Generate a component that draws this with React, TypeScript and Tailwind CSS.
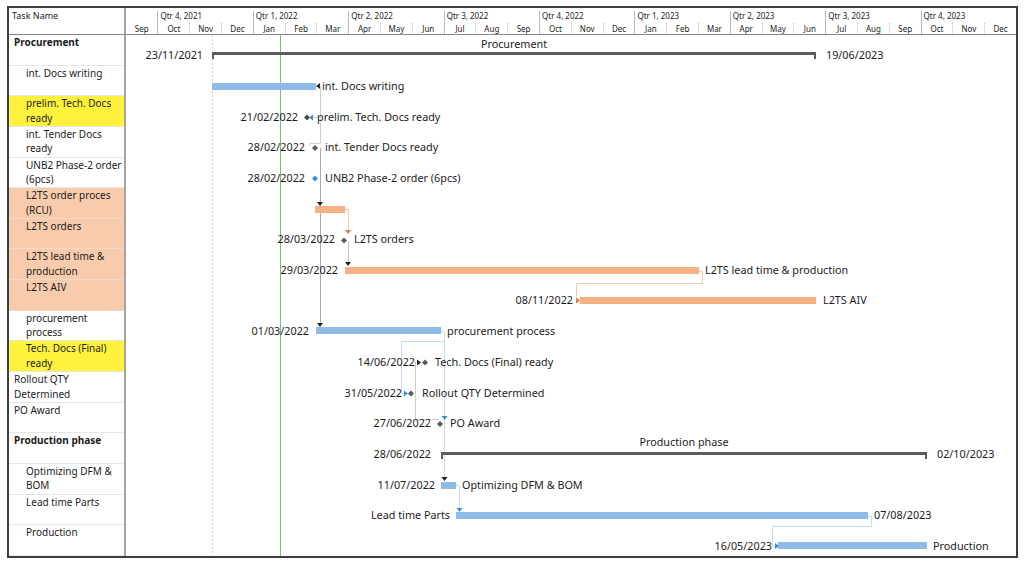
import React from "react";

type Row = { lines: string[]; bold?: boolean; indent?: boolean; bg?: "y" | "s" };

const rows: Row[] = [
  { lines: ["Procurement"], bold: true },
  { lines: ["int. Docs writing"], indent: true },
  { lines: ["prelim. Tech. Docs", "ready"], indent: true, bg: "y" },
  { lines: ["int. Tender Docs", "ready"], indent: true },
  { lines: ["UNB2 Phase-2 order", "(6pcs)"], indent: true },
  { lines: ["L2TS order proces", "(RCU)"], indent: true, bg: "s" },
  { lines: ["L2TS orders"], indent: true, bg: "s" },
  { lines: ["L2TS lead time &", "production"], indent: true, bg: "s" },
  { lines: ["L2TS AIV"], indent: true, bg: "s" },
  { lines: ["procurement", "process"], indent: true },
  { lines: ["Tech. Docs (Final)", "ready"], indent: true, bg: "y" },
  { lines: ["Rollout QTY", "Determined"] },
  { lines: ["PO Award"] },
  { lines: ["Production phase"], bold: true },
  { lines: ["Optimizing DFM &", "BOM"], indent: true },
  { lines: ["Lead time Parts"], indent: true },
  { lines: ["Production"], indent: true },
];

const quarters: { label: string; months: string[] }[] = [
  { label: "", months: ["Sep"] },
  { label: "Qtr 4, 2021", months: ["Oct", "Nov", "Dec"] },
  { label: "Qtr 1, 2022", months: ["Jan", "Feb", "Mar"] },
  { label: "Qtr 2, 2022", months: ["Apr", "May", "Jun"] },
  { label: "Qtr 3, 2022", months: ["Jul", "Aug", "Sep"] },
  { label: "Qtr 4, 2022", months: ["Oct", "Nov", "Dec"] },
  { label: "Qtr 1, 2023", months: ["Jan", "Feb", "Mar"] },
  { label: "Qtr 2, 2023", months: ["Apr", "May", "Jun"] },
  { label: "Qtr 3, 2023", months: ["Jul", "Aug", "Sep"] },
  { label: "Qtr 4, 2023", months: ["Oct", "Nov", "Dec"] },
];

const BLUE = "#8fbbe9";
const SALMON = "#f4b184";

const bars: { x1: number; x2: number; y: number; c: string }[] = [
  { x1: 212, x2: 316, y: 83, c: BLUE },
  { x1: 315, x2: 345, y: 206, c: SALMON },
  { x1: 345, x2: 699, y: 267, c: SALMON },
  { x1: 580, x2: 816, y: 297, c: SALMON },
  { x1: 316, x2: 441, y: 327, c: BLUE },
  { x1: 441, x2: 456, y: 482, c: BLUE },
  { x1: 456, x2: 868, y: 512, c: BLUE },
  { x1: 778, x2: 927, y: 542, c: BLUE },
];

type Lbl = { t: string; x: number; y: number; a?: "start" | "end" | "middle" };
const labels: Lbl[] = [
  { t: "Procurement", x: 514, y: 43, a: "middle" },
  { t: "23/11/2021", x: 203, y: 54, a: "end" },
  { t: "19/06/2023", x: 826, y: 54 },
  { t: "int. Docs writing", x: 322, y: 85 },
  { t: "21/02/2022", x: 298, y: 116, a: "end" },
  { t: "prelim. Tech. Docs ready", x: 317, y: 116 },
  { t: "28/02/2022", x: 305, y: 146, a: "end" },
  { t: "int. Tender Docs ready", x: 325, y: 146 },
  { t: "28/02/2022", x: 305, y: 177, a: "end" },
  { t: "UNB2 Phase-2 order (6pcs)", x: 325, y: 177 },
  { t: "28/03/2022", x: 335, y: 238, a: "end" },
  { t: "L2TS orders", x: 354, y: 238 },
  { t: "29/03/2022", x: 338, y: 269, a: "end" },
  { t: "L2TS lead time & production", x: 705, y: 269 },
  { t: "08/11/2022", x: 573, y: 299, a: "end" },
  { t: "L2TS AIV", x: 823, y: 299 },
  { t: "01/03/2022", x: 309, y: 330, a: "end" },
  { t: "procurement process", x: 447, y: 330 },
  { t: "14/06/2022", x: 415, y: 361, a: "end" },
  { t: "Tech. Docs (Final) ready", x: 435, y: 361 },
  { t: "31/05/2022", x: 402, y: 392, a: "end" },
  { t: "Rollout QTY Determined", x: 422, y: 392 },
  { t: "27/06/2022", x: 431, y: 422, a: "end" },
  { t: "PO Award", x: 450, y: 422 },
  { t: "Production phase", x: 684, y: 441, a: "middle" },
  { t: "28/06/2022", x: 431, y: 453, a: "end" },
  { t: "02/10/2023", x: 937, y: 453 },
  { t: "11/07/2022", x: 435, y: 484, a: "end" },
  { t: "Optimizing DFM & BOM", x: 462, y: 484 },
  { t: "Lead time Parts", x: 450, y: 514, a: "end" },
  { t: "07/08/2023", x: 874, y: 514 },
  { t: "16/05/2023", x: 772, y: 545, a: "end" },
  { t: "Production", x: 933, y: 545 },
];

const down = (cx: number, y: number) => `${cx - 3},${y} ${cx + 3},${y} ${cx},${y + 4}`;
const right = (x: number, cy: number) => `${x},${cy - 3} ${x},${cy + 3} ${x + 4},${cy}`;
const left = (x: number, cy: number) => `${x},${cy - 3} ${x},${cy + 3} ${x - 4},${cy}`;
const dia = (cx: number, cy: number, r = 3) =>
  `${cx},${cy - r} ${cx + r},${cy} ${cx},${cy + r} ${cx - r},${cy}`;

function Summary({ x1, x2, y }: { x1: number; x2: number; y: number }) {
  return (
    <g>
      <rect x={x1} y={y} width={x2 - x1} height={3} fill="#5b5b5b" />
      <rect x={x1} y={y} width={2} height={7} fill="#5b5b5b" />
      <rect x={x2 - 2} y={y} width={2} height={7} fill="#5b5b5b" />
    </g>
  );
}

function Chart() {
  return (
    <svg width={890} height={521} viewBox="126 35 890 521" className="block">
      <line x1={212.5} y1={35} x2={212.5} y2={556} stroke="#d4d4d4" strokeWidth={1} strokeDasharray="2 2" />
      <line x1={280.5} y1={35} x2={280.5} y2={556} stroke="#7dbb7d" strokeWidth={1} />

      {/* connectors */}
      <g fill="none" strokeWidth={1}>
        <path d="M316 86.5 H320.5 V143.5 H309.5 V146" stroke="#cfcfcf" />
        <path d="M320.5 117.5 H312" stroke="#cfcfcf" />
        <path d="M320.5 148 V324" stroke="#a9a9a9" />
        <path d="M348.5 241 V262" stroke="#c4c4c4" />
        <path d="M415.5 362 V419.5 H439" stroke="#cccccc" />
        <path d="M345 209.5 H348.5 V231" stroke="#f5c9a9" />
        <path d="M699 271.5 H702.5 V283.5 H576.5 V297" stroke="#f5c9a9" />
        <path d="M441 331.5 H444.5 V478" stroke="#c4dbf3" />
        <path d="M444.5 341.5 H401.5 V393.5 H404" stroke="#c4dbf3" />
        <path d="M456 485.5 H459.5 V509" stroke="#c4dbf3" />
        <path d="M868 516.5 H871.5 V526.5 H772.5 V546.5 H775" stroke="#c4dbf3" />
      </g>

      {/* summary bars */}
      <Summary x1={212} x2={816} y={52} />
      <Summary x1={441} x2={927} y={452} />

      {/* task bars */}
      {bars.map((b, i) => (
        <rect key={i} x={b.x1} y={b.y} width={b.x2 - b.x1} height={7} fill={b.c} />
      ))}

      {/* arrows and milestones */}
      <polygon points={left(316, 86)} fill="#2a2a2a" transform="translate(4 0)" />
      <polygon points={dia(307, 117.5)} fill="#4a4a4a" />
      <polygon points={left(313, 117.5)} fill="#3d8ddb" />
      <polygon points={dia(315, 148)} fill="#5a5a5a" />
      <polygon points={dia(315, 178.5)} fill="#3d8ddb" />
      <polygon points={down(320, 202)} fill="#222" />
      <polygon points={down(348, 230)} fill="#e07733" />
      <polygon points={dia(344, 240.5)} fill="#5a5a5a" />
      <polygon points={down(348, 262)} fill="#222" />
      <polygon points={right(576, 300.5)} fill="#e07733" />
      <polygon points={down(320, 323)} fill="#222" />
      <polygon points={right(417, 362.5)} fill="#222" />
      <polygon points={dia(425, 362.5)} fill="#5a5a5a" />
      <polygon points={right(404, 393.5)} fill="#3d8ddb" />
      <polygon points={dia(411, 393.5)} fill="#5a5a5a" />
      <polygon points={down(444.5, 416)} fill="#3d8ddb" />
      <polygon points={dia(440, 424)} fill="#5a5a5a" />
      <polygon points={down(444.5, 477)} fill="#222" />
      <polygon points={down(459.5, 508)} fill="#3d8ddb" />
      <polygon points={right(775, 546)} fill="#3d8ddb" />

      {/* labels */}
      {labels.map((l, i) => (
        <text
          key={i}
          x={l.x}
          y={l.y}
          textAnchor={l.a ?? "start"}
          dominantBaseline="central"
          fontSize={10.8}
          fill="#1c1c1c"
        >
          {l.t}
        </text>
      ))}
    </svg>
  );
}

export default function App() {
  return (
    <div className="w-[1024px] h-[563px] bg-white pl-[7px] pt-[6px] font-['Noto_Sans','Liberation_Sans',sans-serif] text-[#1c1c1c]">
      <div className="w-[1011px] h-[552px] border-2 border-[#3d3d3d] flex flex-col overflow-hidden">
        {/* header */}
        <div className="flex h-[27px] border-b border-[#8a8a8a] shrink-0">
          <div className="w-[117px] border-r-2 border-[#a3a3a3] pl-[3px] pt-[2px] text-[9px] leading-[12px]">
            Task Name
          </div>
          <div className="flex-1 flex items-end">
            {quarters.map((q, qi) => (
              <div
                key={qi}
                className={`${q.months.length === 1 ? "flex-[1]" : "flex-[3]"} h-[23px] flex flex-col ${
                  qi === 0 ? "" : "border-l border-[#b9b9b9]"
                }`}
              >
                <div className="h-[10px] text-[8px] leading-[10px] pl-[2px] whitespace-nowrap">{q.label}</div>
                <div className="flex flex-1 items-end">
                  {q.months.map((m, mi) => (
                    <div
                      key={mi}
                      className={`flex-1 h-[11px] text-center text-[8px] leading-[11px] ${
                        mi === 0 ? "" : "border-l border-dotted border-[#bdbdbd]"
                      }`}
                    >
                      {m}
                    </div>
                  ))}
                </div>
              </div>
            ))}
          </div>
        </div>
        {/* body */}
        <div className="flex flex-1">
          <div className="w-[117px] border-r-2 border-[#a3a3a3] flex flex-col">
            {rows.map((r, i) => (
              <div
                key={i}
                className={`h-[30.65px] border-b border-[#e6e6e6] text-[10px] leading-[14.5px] ${
                  r.indent ? "pl-[17px]" : "pl-[5px]"
                } ${r.bold ? "font-bold" : ""} ${
                  r.bg === "y" ? "bg-[#fff23d]" : r.bg === "s" ? "bg-[#f8cbad] border-[#f3d9c7]" : ""
                }`}
              >
                {r.lines.map((l, li) => (
                  <div key={li} className="whitespace-nowrap">
                    {l}
                  </div>
                ))}
              </div>
            ))}
          </div>
          <Chart />
        </div>
      </div>
    </div>
  );
}
